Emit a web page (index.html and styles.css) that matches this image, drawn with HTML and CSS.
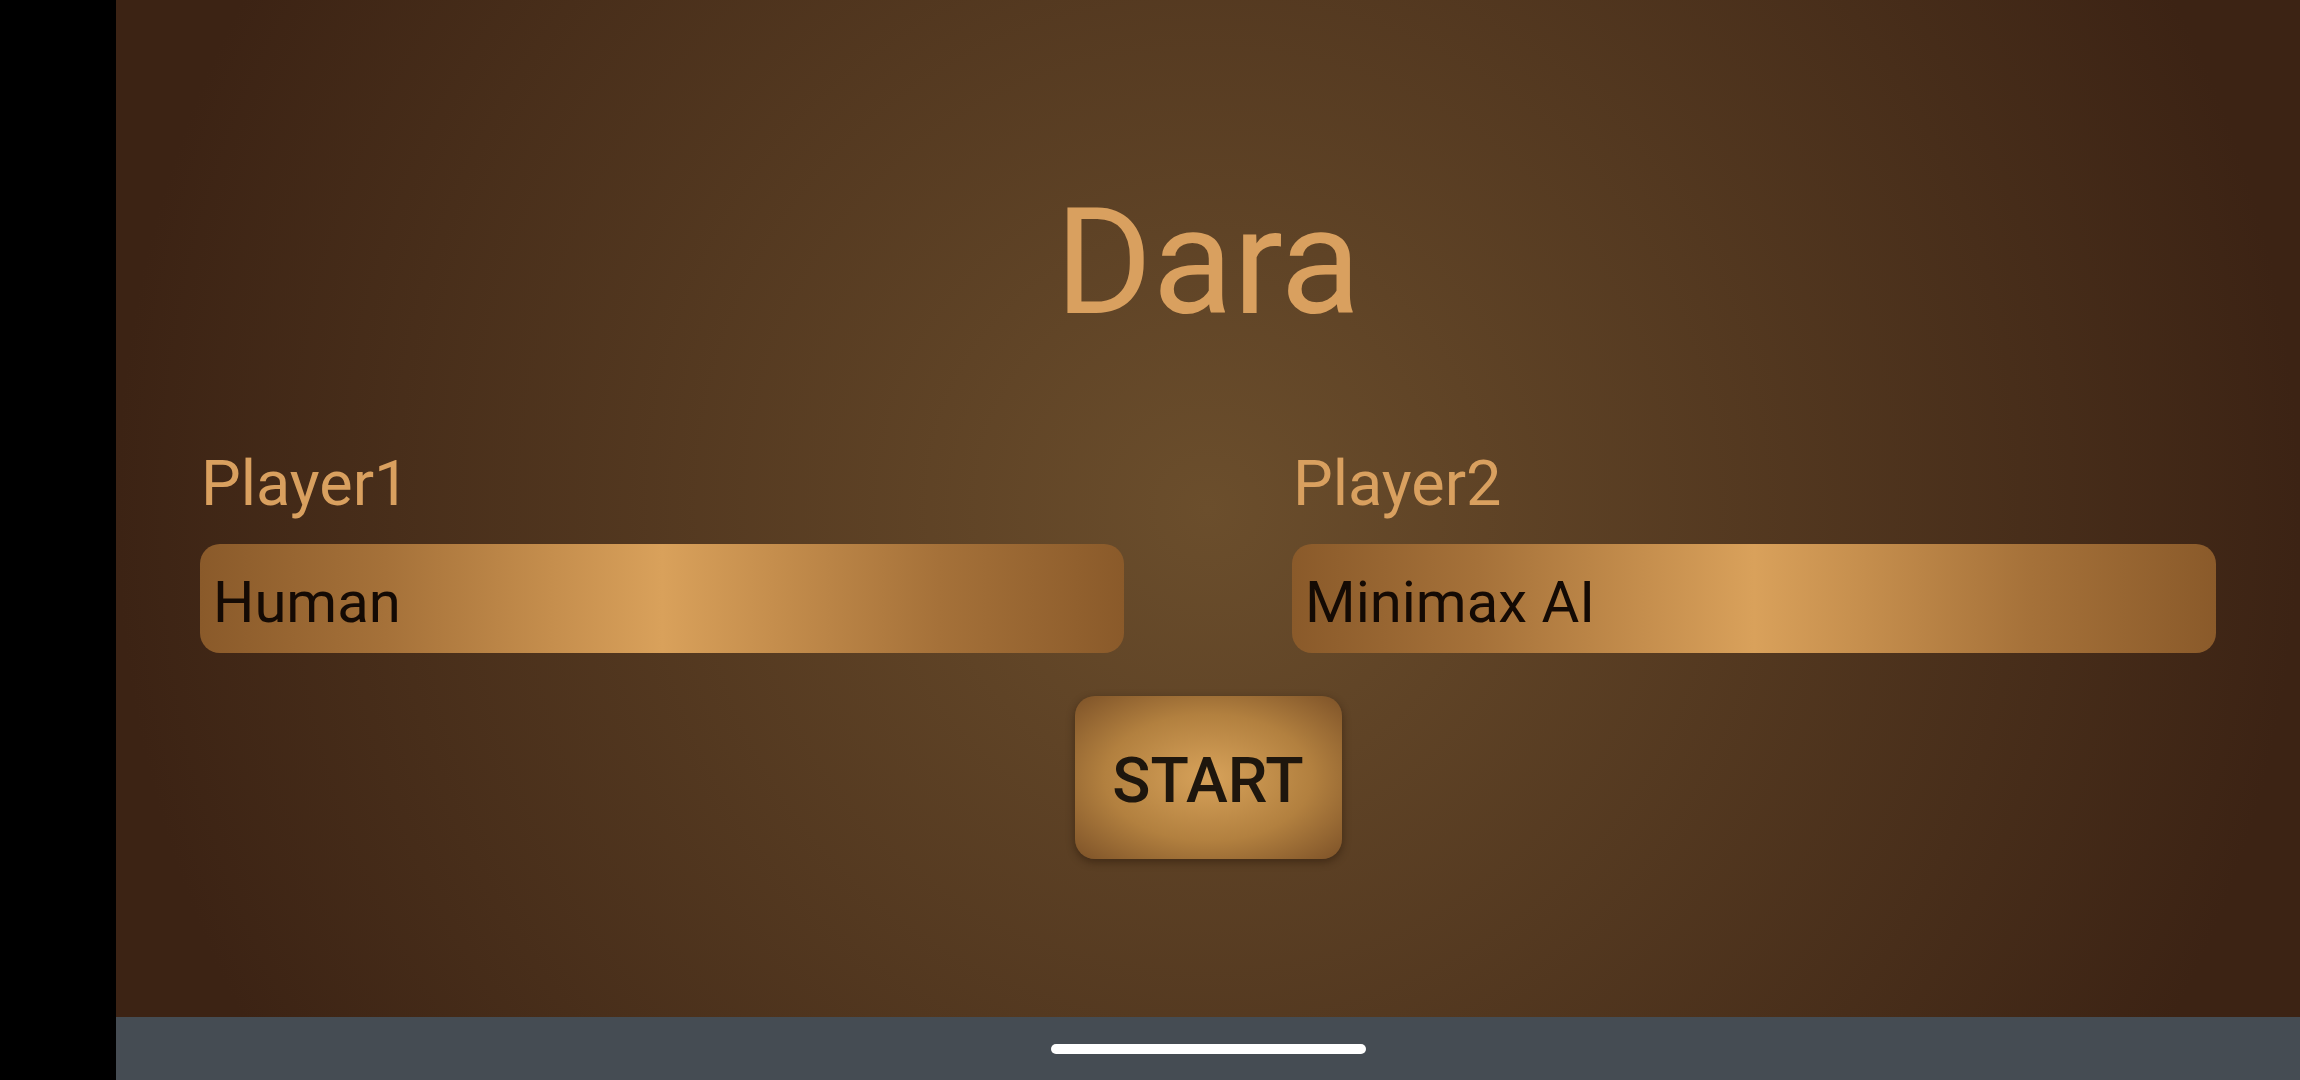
FILE: index.html
```html
<!DOCTYPE html>
<html lang="en">
<head>
<meta charset="utf-8">
<title>Dara</title>
<link rel="stylesheet" href="styles.css">
</head>
<body>
<div class="screen">
  <div class="cutout"></div>
  <div class="app">
    <main class="content">
      <h1 class="title">Dara</h1>
      <div class="players">
        <div class="player">
          <div class="label">Player1</div>
          <div class="field">Human</div>
        </div>
        <div class="player">
          <div class="label">Player2</div>
          <div class="field">Minimax AI</div>
        </div>
      </div>
      <button class="start">START</button>
    </main>
    <nav class="navbar"><div class="pill"></div></nav>
  </div>
</div>
</body>
</html>
```
FILE: styles.css
```css
html, body {
  margin: 0;
  padding: 0;
  width: 2300px;
  height: 1080px;
  overflow: hidden;
  font-family: Roboto, "Liberation Sans", sans-serif;
}
.screen {
  display: flex;
  width: 2300px;
  height: 1080px;
}
.cutout {
  width: 116px;
  flex: none;
  background: #000;
}
.app {
  flex: 1;
  display: flex;
  flex-direction: column;
}
.content {
  height: 1017px;
  flex: none;
  box-sizing: border-box;
  padding: 189px 84px 0;
  display: flex;
  flex-direction: column;
  align-items: center;
  background: radial-gradient(circle farthest-side at 50% 50%, #6b4e2c 0%, #3c2314 100%);
}
.title {
  margin: 0;
  font-weight: 400;
  font-size: 148px;
  line-height: 148px;
  color: #d9a05f;
}
.players {
  align-self: stretch;
  display: flex;
  gap: 168px;
  margin-top: 115px;
}
.player {
  flex: 1;
  display: flex;
  flex-direction: column;
}
.label {
  font-size: 63px;
  line-height: 63px;
  color: #d9a05f;
  padding-left: 1px;
}
.field {
  margin-top: 29px;
  height: 101px;
  padding: 8px 0 0 13px;
  border-radius: 20px;
  font-size: 58px;
  line-height: 101px;
  color: #140a04;
  background: linear-gradient(90deg, #8a5a2a 0%, #a57139 20%, #c58e4d 38%, #d9a15b 50%, #c58e4d 62%, #a57139 80%, #8a5a2a 100%);
  white-space: nowrap;
}
.start {
  margin-top: 43px;
  width: 267px;
  height: 163px;
  padding: 6px 0 0;
  border: none;
  border-radius: 20px;
  font-family: Roboto, "Liberation Sans", sans-serif;
  font-weight: 500;
  font-size: 63px;
  line-height: 157px;
  color: #1e160d;
  background: radial-gradient(ellipse farthest-corner at 50% 50%, #d7a25a 0%, #b2803f 55%, #7d5228 100%);
  box-shadow: 0 3px 8px rgba(30, 15, 5, 0.45);
}
.navbar {
  flex: 1;
  background: #454c53;
  display: flex;
  justify-content: center;
  padding-top: 27px;
  box-sizing: border-box;
}
.pill {
  width: 315px;
  height: 10px;
  border-radius: 5px;
  background: #fff;
}
```
